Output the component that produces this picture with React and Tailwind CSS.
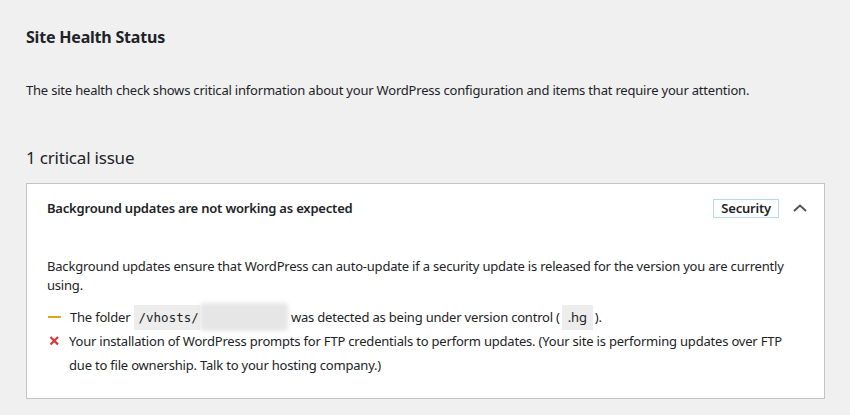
import React from "react";

export default function App() {
  const font = { fontFamily: '"Noto Sans", "Open Sans", sans-serif', letterSpacing: "-0.2px" };
  return (
    <div className="w-[850px] h-[415px] bg-[#f0f0f1] text-[#1d2327] overflow-hidden" style={font}>
      <div className="pl-[26px] pr-[25px]">
        <h1 className="pt-[26px] text-[16px] font-bold leading-[22px]">Site Health Status</h1>
        <p className="mt-[33px] text-[13px] leading-[19px]">
          The site health check shows critical information about your WordPress configuration and items that require your attention.
        </p>
        <h2 className="mt-[46px] text-[17px] leading-[24px]">1 critical issue</h2>
        <div className="mt-[13px] bg-white border border-[#c3c4c7] h-[216px]">
          <div className="flex items-center h-[48px] pl-[20px] pr-[16px]">
            <div className="flex-1 text-[13px] font-semibold leading-[19px]">Background updates are not working as expected</div>
            <span className="border border-[#b5daf0] px-[7px] text-[13px] font-semibold leading-[17px] h-[19px] mr-[13px]">Security</span>
            <svg width="16" height="10" viewBox="0 0 16 10">
              <path d="M2 8 L8 2.5 L14 8" fill="none" stroke="#50575e" strokeWidth="2" />
            </svg>
          </div>
          <div className="pl-[20px] pr-[20px] pt-[25px] text-[13px] leading-[19px]">
            <p>Background updates ensure that WordPress can auto-update if a security update is released for the version you are currently using.</p>
            <p className="mt-[10px] flex items-center h-[24px] leading-[24px]">
              <span className="inline-block w-[13px] h-[2px] bg-[#dba617] ml-[1px] mr-[9px]"></span>
              <span>The folder&nbsp;</span>
              <code className="bg-[#ededed] pl-[5px] pr-[1px] py-[3px] text-[12.5px] leading-[19px]" style={{ fontFamily: '"DejaVu Sans Mono", monospace', letterSpacing: "0" }}>
                /vhosts/
              </code>
              <span className="inline-block w-[88px] h-[28px] bg-[#e6e6e6] rounded-[4px] blur-[2px]"></span>
              <span>&nbsp;was detected as being under version control (</span>
              <code className="bg-[#ededed] px-[6px] py-[3px] leading-[19px] mx-[2px]" style={{ fontFamily: '"Noto Sans", sans-serif' }}>.hg</code>
              <span>).</span>
            </p>
            <div className="flex leading-[24px]">
              <svg width="24" height="24" viewBox="0 0 24 24" className="shrink-0 -ml-[2px]">
                <path d="M5.5 7 L13 14.5 M13 7 L5.5 14.5" fill="none" stroke="#d63638" strokeWidth="2.2" transform="translate(0,1)" />
              </svg>
              <p>
                Your installation of WordPress prompts for FTP credentials to perform updates. (Your site is performing updates over FTP due to file ownership. Talk to your hosting company.)
              </p>
            </div>
          </div>
        </div>
      </div>
    </div>
  );
}
